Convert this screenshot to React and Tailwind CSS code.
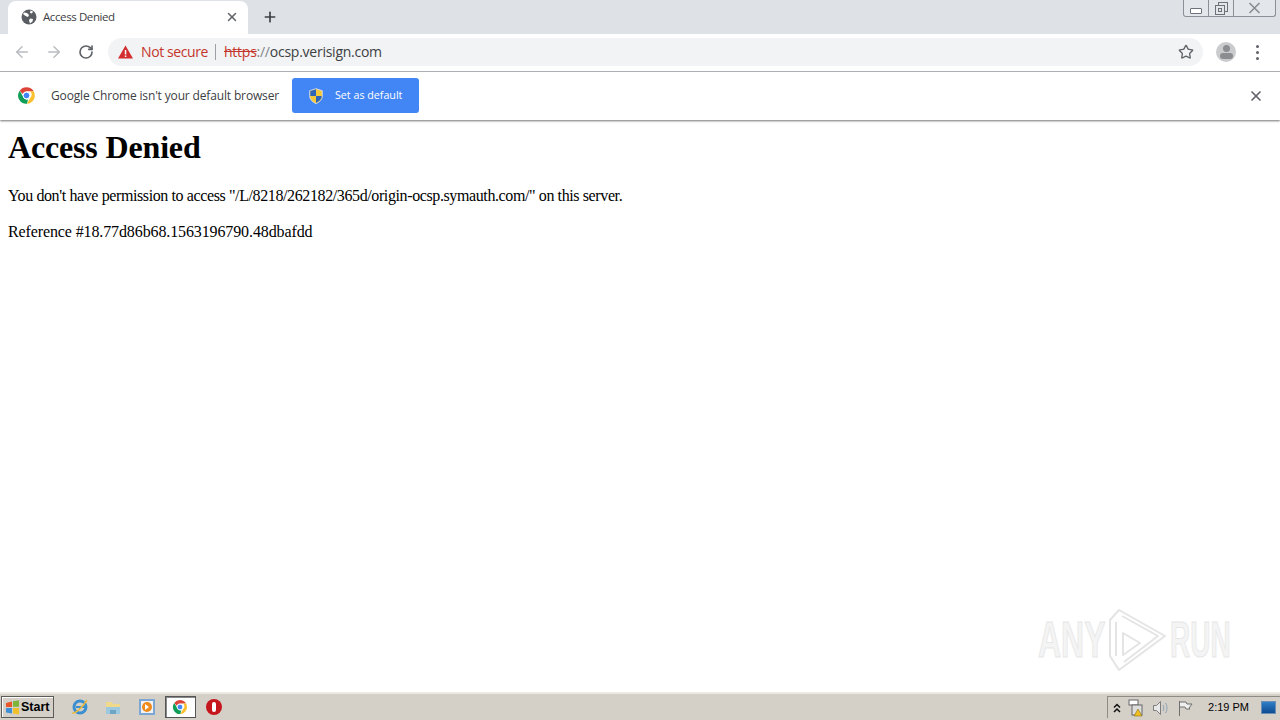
import { ArrowLeft, ArrowRight, RotateCw, Star, X, Plus } from 'lucide-react';

const ChromeLogo = ({ size = 18 }) => (
  <svg width={size} height={size} viewBox="0 0 48 48">
    <path d="M24 3a21 21 0 0 1 18.200 10.500H24a10.500 10.500 0 0 0-9.800 6.800L6.800 11.800A21 21 0 0 1 24 3z" fill="#db4437" />
    <path d="M42.200 13.500A21 21 0 0 1 25 45l8.800-15.200A10.500 10.500 0 0 0 32.500 13.500z" fill="#fbc02d" />
    <path d="M25 45A21 21 0 0 1 6.800 11.800l8.800 15.400A10.500 10.500 0 0 0 28 34z" fill="#0f9d58" />
    <circle cx="24" cy="24" r="8.500" fill="#4285f4" stroke="#fff" strokeWidth="2.500" />
  </svg>
);

const TabGlobe = () => (
  <svg width="16" height="16" viewBox="0 0 16 16">
    <circle cx="8" cy="8" r="7.500" fill="#5a5e63" />
    <path d="M3 3.500l3 .5 2 2-1 2-2.500-1-2.500-2zM9 9.500l3 .5-.5 2.500-2.500 2-1-3zM9.500 1.500l2.500 1-1 2-2-.5z" fill="#fff" />
  </svg>
);

const Shield = () => (
  <svg width="16" height="16" viewBox="0 0 16 16">
    <path d="M8 .7l6.300 2v5c0 4-2.800 6.300-6.300 7.900-3.500-1.600-6.300-3.900-6.300-7.900v-5z" fill="#f5c93a" stroke="#dfe6f2" strokeWidth=".8" />
    <path d="M8 1.300V8H2.300V3.100zM8 8h5.700c0 3.300-2.500 5.300-5.700 6.900z" fill="#2f66b8" />
  </svg>
);

const Avatar = () => (
  <div className="w-5 h-5 rounded-full bg-[#c9cbcd] flex flex-col items-center justify-center overflow-hidden">
    <div className="w-[7px] h-[7px] rounded-full bg-[#8b8d90]" />
    <div className="w-[13px] h-[6px] mt-[1px] rounded-full bg-[#8b8d90]" />
  </div>
);

const WindowButtons = () => (
  <div className="flex h-[17px] border border-t-0 border-[#8b9098] rounded-b-[3px] bg-[#e3e6ea]">
    <div className="w-[25px] flex items-end justify-center pb-[2px] border-r border-[#8b9098]">
      <div className="w-[12px] h-[6px] border border-[#6d7278] bg-white rounded-[1px]" />
    </div>
    <div className="w-[25px] flex items-center justify-center border-r border-[#8b9098]">
      <svg width="13" height="13" viewBox="0 0 13 13" fill="none" stroke="#6d7278">
        <rect x="3.500" y="0.500" width="9" height="9" fill="#e3e6ea" />
        <rect x="0.500" y="3.500" width="9" height="9" fill="#e3e6ea" />
        <rect x="3.500" y="6.500" width="3" height="3" />
      </svg>
    </div>
    <div className="w-[41px] flex items-center justify-center">
      <svg width="13" height="12" viewBox="0 0 13 12" fill="none" stroke="#858a90" strokeWidth="1.500">
        <path d="M1.500 1L11.500 11M11.500 1L1.500 11" />
      </svg>
    </div>
  </div>
);

const QuickIcons = () => (
  <div className="flex items-center ml-[9px]">
    <div className="w-[33.500px] flex justify-center">
      <svg width="18" height="18" viewBox="0 0 18 18">
        <circle cx="9" cy="9" r="6" fill="none" stroke="#3a8fd0" strokeWidth="3" />
        <path d="M5 9h9" stroke="#3a8fd0" strokeWidth="2" />
        <path d="M1 15c3 1 10-5 15-13" fill="none" stroke="#e8b93c" strokeWidth="1.500" />
      </svg>
    </div>
    <div className="w-[33.500px] flex justify-center">
      <svg width="18" height="18" viewBox="0 0 18 18">
        <path d="M2 4h6l1 2h7v10H2z" fill="#f0d98a" />
        <path d="M2 9h14v7H2z" fill="#9cc8e0" />
        <path d="M6 16v-4h6v4" fill="#6ea5c5" />
      </svg>
    </div>
    <div className="w-[33.500px] flex justify-center">
      <div className="w-[16px] h-[16px] bg-[#f3f3f3] border-2 border-[#7ca6d4] flex items-center justify-center">
        <div className="w-[10px] h-[10px] rounded-full bg-[#ef8a1d] flex items-center justify-center">
          <div className="w-0 h-0 border-y-[3px] border-y-transparent border-l-[4px] border-l-white ml-[1px]" />
        </div>
      </div>
    </div>
    <div className="w-[33.500px] flex justify-center">
      <div className="w-[31px] h-[22px] bg-white border border-[#555] shadow-[inset_1px_1px_0_#888] flex items-center justify-center">
        <ChromeLogo size={16} />
      </div>
    </div>
    <div className="w-[33.500px] flex justify-center">
      <div className="w-4 h-4 rounded-full bg-[#c4161c] flex items-center justify-center">
        <div className="w-[4px] h-[10px] rounded-full bg-white" />
      </div>
    </div>
  </div>
);

const Tray = () => (
  <div className="flex items-center h-[22px] border-l border-t border-[#8f8c85] pl-[5px] pr-[4px]">
    <svg width="8" height="10" viewBox="0 0 8 10" fill="none" stroke="#111" strokeWidth="1.500">
      <path d="M1 4.500L4 1.500l3 3M1 9L4 6l3 3" />
    </svg>
    <svg className="ml-[7px]" width="17" height="18" viewBox="0 0 17 18">
      <rect x="1" y="1" width="9" height="5" fill="#fff" stroke="#666" />
      <rect x="4" y="6" width="10" height="10" fill="#ddd" stroke="#666" />
      <path d="M10 10l4 7H6z" fill="#f0c020" stroke="#7a5a00" strokeWidth=".5" />
    </svg>
    <svg className="ml-[7px]" width="17" height="16" viewBox="0 0 17 16" fill="none" stroke="#7d7d7d">
      <path d="M1.500 5.500h3l4-4v13l-4-4h-3z" fill="#e8e8e8" />
      <path d="M11 5c1 2 1 4 0 6M13.500 3c2 3 2 7 0 10" stroke="#8ba1b5" />
    </svg>
    <svg className="ml-[8px]" width="16" height="16" viewBox="0 0 16 16" fill="none" stroke="#6f6f6f">
      <path d="M2.500 1v15" />
      <path d="M3 2h6l1 2h5l-3 4 1 1H9L8 7H3" fill="#efefef" />
    </svg>
    <span className="ml-[15px] text-[11px] text-black">2:19 PM</span>
    <div className="ml-3 w-[15px] h-[13px] bg-gradient-to-b from-[#2f7fc8] to-[#0f4c92] border border-[#6b8fb5]" />
  </div>
);

export default function App() {
  return (
    <div className="relative w-[1280px] h-[720px] overflow-hidden flex flex-col bg-white font-['Liberation_Sans',sans-serif]">
      {/* tab strip */}
      <div className="h-[34px] bg-[#dee1e6] flex shrink-0">
        <div className="ml-2 mt-[1px] w-[240px] h-[33px] bg-white rounded-t-[8px] flex items-center pl-[13px] pr-[9px] pb-[2px]">
          <TabGlobe />
          <span className="ml-[6px] text-[11.500px] tracking-[-0.4px] text-[#3c4043] flex-1 font-['Open_Sans',sans-serif]">Access Denied</span>
          <X size={14} strokeWidth={2.5} className="text-[#5f6368]" />
        </div>
        <div className="ml-[14px] mt-[9px]">
          <Plus size={16} strokeWidth={2.5} className="text-[#3c4043]" />
        </div>
        <div className="ml-auto mr-[4px] self-start">
          <WindowButtons />
        </div>
      </div>

      {/* toolbar */}
      <div className="h-[38px] pb-[1px] bg-white border-b border-[#b4b6b9] flex items-center shrink-0 pl-[13px]">
        <ArrowLeft size={18} strokeWidth={2} className="text-[#b9bcc0]" />
        <ArrowRight size={18} strokeWidth={2} className="ml-[14px] text-[#b9bcc0]" />
        <RotateCw size={16} strokeWidth={2.5} className="ml-[15px] text-[#5f6368]" />
        <div className="ml-[14px] w-[1095px] h-[28px] bg-[#f1f3f4] rounded-full flex items-center pl-[10px] pr-[9px]">
          <svg width="15" height="14" viewBox="0 0 15 14">
            <path d="M7.500 .5L15 13.500H0z" fill="#d32f2f" />
            <rect x="6.800" y="5" width="1.500" height="4.500" fill="#fff" />
            <rect x="6.800" y="10.500" width="1.500" height="1.500" fill="#fff" />
          </svg>
          <span className="ml-2 pb-[2px] text-[14px] text-[#c5352c] font-['Open_Sans',sans-serif] tracking-[-0.4px]">Not secure</span>
          <div className="ml-[7px] w-px h-4 bg-[#9aa0a6]" />
          <span className="ml-2 pb-[2px] text-[14px] text-[#5f6368] font-['Open_Sans',sans-serif] tracking-[-0.25px]">
            <span className="text-[#c5352c] line-through">https</span>
            <span className="text-[#80868b]">://</span>
            <span className="text-[#3c4043]">ocsp.verisign.com</span>
          </span>
          <Star size={16} strokeWidth={2} className="ml-auto text-[#5f6368]" />
        </div>
        <div className="ml-[13px]"><Avatar /></div>
        <div className="ml-[20px] flex flex-col gap-[3px]">
          <div className="w-[3px] h-[3px] rounded-full bg-[#5f6368]" />
          <div className="w-[3px] h-[3px] rounded-full bg-[#5f6368]" />
          <div className="w-[3px] h-[3px] rounded-full bg-[#5f6368]" />
        </div>
      </div>

      {/* default browser infobar */}
      <div className="h-[48px] pb-[1px] bg-white shadow-[0_1px_2px_rgba(0,0,0,0.55)] flex items-center shrink-0 pl-[17px] pr-[16px] z-10">
        <ChromeLogo size={19} />
        <span className="ml-[15px] w-[228px] whitespace-nowrap text-[12px] text-[#3c4043] font-['Open_Sans',sans-serif] tracking-[-0.15px]">Google Chrome isn't your default browser</span>
        <button className="ml-[13px] w-[127px] h-[35px] bg-[#4285f4] rounded-[3px] flex items-center pl-4 text-white">
          <Shield />
          <span className="ml-[11px] text-[10.700px] font-['Open_Sans',sans-serif]">Set as default</span>
        </button>
        <X size={16} strokeWidth={2.5} className="ml-auto text-[#5f6368]" />
      </div>

      {/* page */}
      <div className="flex-1 px-2 pt-[9px] text-black font-['Liberation_Serif',serif] text-[16px]">
        <h1 className="text-[32px] leading-[37px] font-bold tracking-[-0.16px]">Access Denied</h1>
        <p className="mt-[21px] leading-[18px] tracking-[-0.39px]">You don't have permission to access "/L/8218/262182/365d/origin-ocsp.symauth.com/" on this server.</p>
        <p className="mt-[18px] leading-[18px] tracking-[-0.116px]">Reference #18.77d86b68.1563196790.48dbafdd</p>
      </div>

      {/* watermark */}
      <div className="absolute left-[1038px] top-[608px] h-[64px] w-[194px] flex items-center pointer-events-none text-[#f4f4f4] [-webkit-text-stroke:1px_#e6e6e6]">
        <span className="block w-[70px] text-[50px] font-bold leading-none origin-left scale-x-[.64] whitespace-nowrap">ANY</span>
        <svg width="60" height="64" viewBox="0 0 60 64" fill="none" stroke="#e4e4e4" strokeWidth="2" strokeLinejoin="round">
          <path d="M11 2L57 28 11 62 2 48V12z" />
          <path d="M8 14v34M15 25l17 10-17 12z" />
          <path d="M14 8l36 20-34 26" />
        </svg>
        <span className="block ml-[2px] w-[62px] text-[50px] font-bold leading-none origin-left scale-x-[.56] whitespace-nowrap">RUN</span>
      </div>

      {/* taskbar */}
      <div className="h-[28px] bg-[#d4d0c8] border-t-2 border-t-[#ece9e2] flex items-center shrink-0 pl-[1px]">
        <button className="w-[53px] h-[22px] bg-[#d4d0c8] border border-[#5d5b56] shadow-[inset_1px_1px_0_#fff] flex items-center pl-[3px]">
          <svg width="15" height="15" viewBox="0 0 15 15">
            <path d="M1 3l6-1.500V7H1z" fill="#e8562a" />
            <path d="M8 1.300l6-1v6.500H8z" fill="#7cb53a" />
            <path d="M1 8h6v5.500l-6-1z" fill="#3f8fd6" />
            <path d="M8 8h6v6.500l-6-1z" fill="#f0c02c" />
          </svg>
          <span className="ml-[1px] text-[12.500px] font-bold text-black leading-none">Start</span>
        </button>
        <QuickIcons />
        <div className="ml-auto"><Tray /></div>
      </div>
    </div>
  );
}
